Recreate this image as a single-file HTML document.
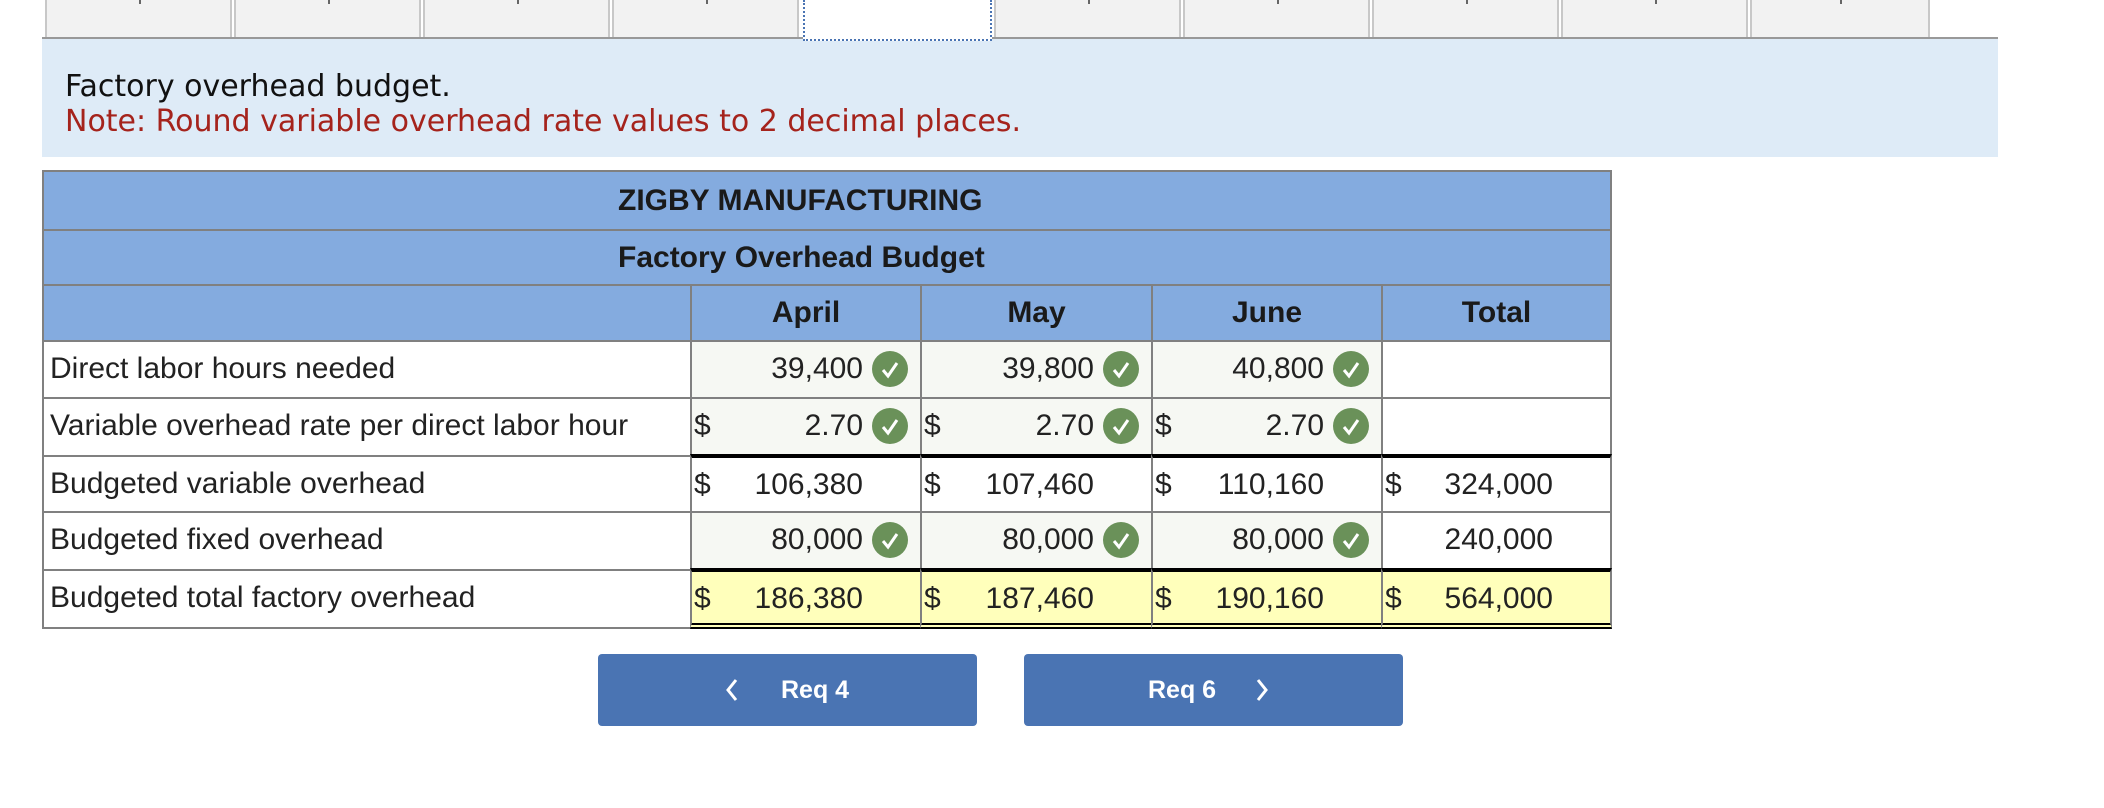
<!DOCTYPE html>
<html><head><meta charset="utf-8"><style>
*{margin:0;padding:0;box-sizing:border-box}
body{width:2104px;height:808px;background:#fff;position:relative;overflow:hidden;font-family:"Liberation Sans",Arial,sans-serif;color:#222}
.a{position:absolute}
.tab{position:absolute;top:0;height:37px;background:#f2f2f2;border-left:2px solid #c8c8c8;border-right:2px solid #c8c8c8}
.tab i{position:absolute;left:50%;top:0;width:2px;height:4px;background:#666}
.cell{position:absolute;border:2px solid #808080;font-size:30px;line-height:53px;white-space:nowrap}
.hd{background:#84abdf;font-weight:bold;color:#1a1a1a;text-align:center}
.lbl{padding-left:6px;background:#fff}
.in{background:#f6f8f3}
.wh{background:#fff}
.ye{background:#ffffbb}
.num{position:absolute;right:57px;top:0}
.dol{position:absolute;left:2px;top:0}
.chk{position:absolute;right:12px;top:9px;width:36px;height:36px;border-radius:50%;background:#6a9159}
.chk svg{position:absolute;left:0;top:0}
.tb{border-top:4px solid #000}
.btn{position:absolute;top:654px;height:72px;width:379px;background:#4a74b3;border-radius:4px;color:#fff;font-weight:bold;font-size:25px;line-height:72px}
</style></head><body>
<div class="tab" style="left:45px;width:187px"><i></i></div>
<div class="tab" style="left:234px;width:187px"><i></i></div>
<div class="tab" style="left:423px;width:187px"><i></i></div>
<div class="tab" style="left:612px;width:187px"><i></i></div>
<div class="a" style="left:803px;top:0;width:189px;height:41px;background:#fff;border:2px dotted #4a74b3;border-top:none;z-index:2"></div>
<div class="tab" style="left:994px;width:187px"><i></i></div>
<div class="tab" style="left:1183px;width:187px"><i></i></div>
<div class="tab" style="left:1372px;width:187px"><i></i></div>
<div class="tab" style="left:1561px;width:187px"><i></i></div>
<div class="tab" style="left:1750px;width:180px"><i></i></div>
<div class="a" style="left:42px;top:37px;width:1956px;height:2px;background:#999"></div>
<div class="a" style="left:42px;top:39px;width:1956px;height:118px;background:#deebf7"></div>
<div class="a" style="left:65px;top:69px;font-family:'DejaVu Sans',sans-serif;font-size:30px;color:#111;line-height:36px">Factory overhead budget.</div>
<div class="a" style="left:65px;top:104px;font-family:'DejaVu Sans',sans-serif;font-size:30px;color:#a5231c;line-height:36px">Note: Round variable overhead rate values to 2 decimal places.</div>

<div class="cell hd" style="left:42px;top:170px;width:1570px;height:61px;line-height:57px;text-align:left;padding-left:574px">ZIGBY MANUFACTURING</div>
<div class="cell hd" style="left:42px;top:229px;width:1570px;height:57px;text-align:left;padding-left:574px">Factory Overhead Budget</div>
<div class="cell hd" style="left:42px;top:284px;width:650px;height:58px"></div>
<div class="cell hd" style="left:690px;top:284px;width:232px;height:58px">April</div>
<div class="cell hd" style="left:920px;top:284px;width:233px;height:58px">May</div>
<div class="cell hd" style="left:1151px;top:284px;width:232px;height:58px">June</div>
<div class="cell hd" style="left:1381px;top:284px;width:231px;height:58px">Total</div>

<div class="cell lbl" style="left:42px;top:340px;width:650px;height:59px">Direct labor hours needed</div>
<div class="cell in" style="left:690px;top:340px;width:232px;height:59px"><span class="num">39,400</span><span class="chk"><svg width="36" height="36"><path d="M11 19l5 6 9-13" stroke="#fff" stroke-width="3" fill="none"/></svg></span></div>
<div class="cell in" style="left:920px;top:340px;width:233px;height:59px"><span class="num">39,800</span><span class="chk"><svg width="36" height="36"><path d="M11 19l5 6 9-13" stroke="#fff" stroke-width="3" fill="none"/></svg></span></div>
<div class="cell in" style="left:1151px;top:340px;width:232px;height:59px"><span class="num">40,800</span><span class="chk"><svg width="36" height="36"><path d="M11 19l5 6 9-13" stroke="#fff" stroke-width="3" fill="none"/></svg></span></div>
<div class="cell wh" style="left:1381px;top:340px;width:231px;height:59px"></div>

<div class="cell lbl" style="left:42px;top:397px;width:650px;height:60px">Variable overhead rate per direct labor hour</div>
<div class="cell in" style="left:690px;top:397px;width:232px;height:60px"><span class="dol">$</span><span class="num">2.70</span><span class="chk"><svg width="36" height="36"><path d="M11 19l5 6 9-13" stroke="#fff" stroke-width="3" fill="none"/></svg></span></div>
<div class="cell in" style="left:920px;top:397px;width:233px;height:60px"><span class="dol">$</span><span class="num">2.70</span><span class="chk"><svg width="36" height="36"><path d="M11 19l5 6 9-13" stroke="#fff" stroke-width="3" fill="none"/></svg></span></div>
<div class="cell in" style="left:1151px;top:397px;width:232px;height:60px"><span class="dol">$</span><span class="num">2.70</span><span class="chk"><svg width="36" height="36"><path d="M11 19l5 6 9-13" stroke="#fff" stroke-width="3" fill="none"/></svg></span></div>
<div class="cell wh" style="left:1381px;top:397px;width:231px;height:60px"></div>

<div class="cell lbl" style="left:42px;top:455px;width:650px;height:58px">Budgeted variable overhead</div>
<div class="cell wh tb" style="left:690px;top:454px;width:232px;height:59px"><span class="dol">$</span><span class="num">106,380</span></div>
<div class="cell wh tb" style="left:920px;top:454px;width:233px;height:59px"><span class="dol">$</span><span class="num">107,460</span></div>
<div class="cell wh tb" style="left:1151px;top:454px;width:232px;height:59px"><span class="dol">$</span><span class="num">110,160</span></div>
<div class="cell wh tb" style="left:1381px;top:454px;width:231px;height:59px"><span class="dol">$</span><span class="num">324,000</span></div>

<div class="cell lbl" style="left:42px;top:511px;width:650px;height:60px">Budgeted fixed overhead</div>
<div class="cell in" style="left:690px;top:511px;width:232px;height:60px"><span class="num">80,000</span><span class="chk"><svg width="36" height="36"><path d="M11 19l5 6 9-13" stroke="#fff" stroke-width="3" fill="none"/></svg></span></div>
<div class="cell in" style="left:920px;top:511px;width:233px;height:60px"><span class="num">80,000</span><span class="chk"><svg width="36" height="36"><path d="M11 19l5 6 9-13" stroke="#fff" stroke-width="3" fill="none"/></svg></span></div>
<div class="cell in" style="left:1151px;top:511px;width:232px;height:60px"><span class="num">80,000</span><span class="chk"><svg width="36" height="36"><path d="M11 19l5 6 9-13" stroke="#fff" stroke-width="3" fill="none"/></svg></span></div>
<div class="cell wh" style="left:1381px;top:511px;width:231px;height:60px"><span class="num">240,000</span></div>

<div class="cell lbl" style="left:42px;top:569px;width:650px;height:60px">Budgeted total factory overhead</div>
<div class="cell ye tb" style="left:690px;top:568px;width:232px;height:61px;border-bottom:6px double #000"><span class="dol">$</span><span class="num">186,380</span></div>
<div class="cell ye tb" style="left:920px;top:568px;width:233px;height:61px;border-bottom:6px double #000"><span class="dol">$</span><span class="num">187,460</span></div>
<div class="cell ye tb" style="left:1151px;top:568px;width:232px;height:61px;border-bottom:6px double #000"><span class="dol">$</span><span class="num">190,160</span></div>
<div class="cell ye tb" style="left:1381px;top:568px;width:231px;height:61px;border-bottom:6px double #000"><span class="dol">$</span><span class="num">564,000</span></div>

<div class="btn" style="left:598px"><svg class="a" style="left:127px;top:24px" width="14" height="24"><path d="M11 2L3 12l8 10" stroke="#fff" stroke-width="3" fill="none"/></svg><span class="a" style="left:183px">Req 4</span></div>
<div class="btn" style="left:1024px"><span class="a" style="left:124px">Req 6</span><svg class="a" style="left:231px;top:24px" width="14" height="24"><path d="M3 2l8 10-8 10" stroke="#fff" stroke-width="3" fill="none"/></svg></div>
</body></html>
